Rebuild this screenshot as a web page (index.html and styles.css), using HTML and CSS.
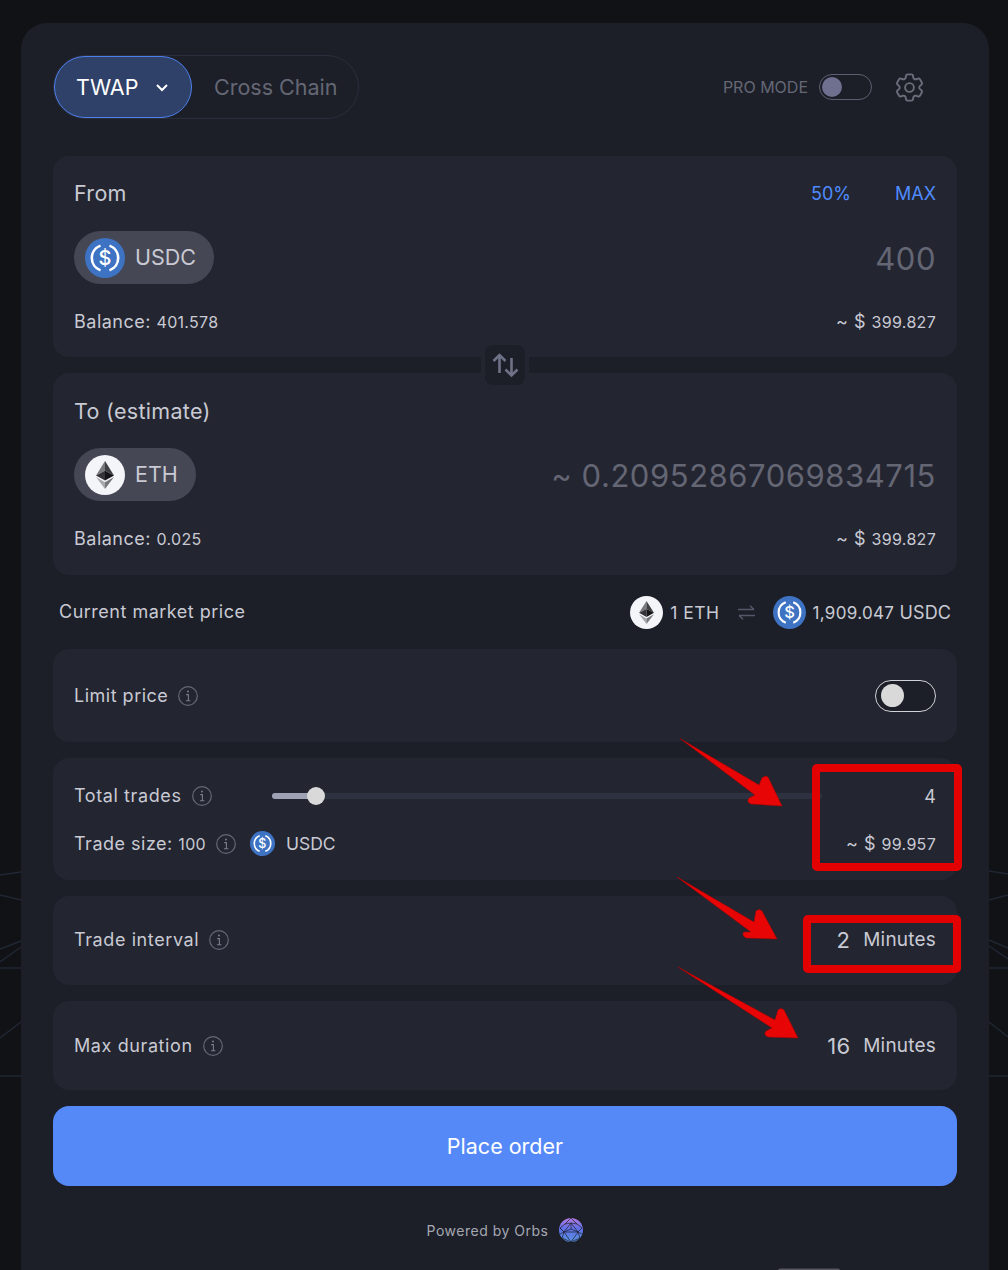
FILE: index.html
```html
<!DOCTYPE html>
<html lang="en">
<head>
  <meta charset="UTF-8">
  <meta name="viewport" content="width=device-width, initial-scale=1.0">
  <title>TWAP</title>
  <link rel="stylesheet" href="styles.css">
</head>
<body>
  <svg class="sprite" width="0" height="0">
    <symbol id="usdc" viewBox="0 0 40 40">
      <circle cx="20" cy="20" r="20" fill="#3e73c4"/>
      <path d="M15.5 7.600a13.200 13.200 0 0 0 0 24.800M24.500 7.600a13.200 13.200 0 0 1 0 24.800" fill="none" stroke="#fff" stroke-width="2.600"/>
    </symbol>
    <symbol id="eth" viewBox="0 0 40 40">
      <circle cx="20" cy="20" r="20" fill="#f3f5f9"/>
      <path d="M20 6 11 20.400 20 15.800z" fill="#7a7a7e"/>
      <path d="M20 6 29 20.400 20 15.800z" fill="#3f3f42"/>
      <path d="M20 15.800 11 20.400 20 25.600z" fill="#343437"/>
      <path d="M20 15.800 29 20.400 20 25.600z" fill="#141416"/>
      <path d="M11 22 20 34V27.300z" fill="#a9a9ac"/>
      <path d="M29 22 20 34V27.300z" fill="#77777b"/>
    </symbol>
    <symbol id="info" viewBox="0 0 20 20">
      <circle cx="10" cy="10" r="9.300" fill="none" stroke="#666876" stroke-width="1.200"/>
      <circle cx="10" cy="5.600" r="1" fill="#7b7d8b"/>
      <path d="M8.200 8.600H10.400V14.600M8 14.800H12.400" fill="none" stroke="#7b7d8b" stroke-width="1.100"/>
    </symbol>
  </svg>

  <svg class="bg-lines" width="1008" height="1270" viewBox="0 0 1008 1270">
    <path d="M0 875 21 872M0 895 21 900M0 949 21 941M0 962 21 947M0 968H21M0 1038 21 1022M0 1076H21"/>
    <path d="M989 871 1008 874M989 900 1008 895M989 940 1008 948M989 946 1008 959M989 968H1008M989 1022 1008 1037M989 1076H1008"/>
  </svg>

  <main class="panel">
    <header class="panel__head">
      <div class="tabs">
        <button class="tab tab--active">TWAP
          <svg width="14" height="9" viewBox="0 0 14 9"><path d="M2 2 7 7 12 2" fill="none" stroke="#fff" stroke-width="2"/></svg>
        </button>
        <button class="tab">Cross Chain</button>
      </div>
      <div class="head__tools">
        <span class="pro-label">PRO MODE</span>
        <span class="toggle toggle--pro"><i></i></span>
        <svg class="gear" width="35" height="35" viewBox="0 0 24 24" fill="none" stroke="#6b6d7b" stroke-width="1.300">
          <path d="M9.594 3.940c.09-.542.56-.94 1.110-.94h2.593c.55 0 1.020.398 1.110.94l.213 1.281c.063.374.313.686.645.87.074.04.147.083.22.127.324.196.72.257 1.075.124l1.217-.456a1.125 1.125 0 011.370.49l1.296 2.247a1.125 1.125 0 01-.26 1.431l-1.003.827c-.293.24-.438.613-.431.992a6.759 6.759 0 010 .255c-.007.378.138.75.43.99l1.005.828c.424.35.534.954.26 1.43l-1.298 2.247a1.125 1.125 0 01-1.369.491l-1.217-.456c-.355-.133-.75-.072-1.076.124a6.57 6.57 0 01-.22.128c-.331.183-.581.495-.644.869l-.213 1.280c-.09.543-.56.941-1.110.941h-2.594c-.55 0-1.020-.398-1.110-.94l-.213-1.281c-.062-.374-.312-.686-.644-.87a6.52 6.52 0 01-.22-.127c-.325-.196-.72-.257-1.076-.124l-1.217.456a1.125 1.125 0 01-1.369-.49l-1.297-2.247a1.125 1.125 0 01.26-1.431l1.004-.827c.292-.24.437-.613.43-.992a6.932 6.932 0 010-.255c.007-.378-.138-.75-.43-.99l-1.004-.828a1.125 1.125 0 01-.26-1.430l1.297-2.247a1.125 1.125 0 011.370-.491l1.216.456c.356.133.751.072 1.076-.124.072-.044.146-.087.22-.128.332-.183.582-.495.644-.869l.214-1.281z"/>
          <circle cx="12" cy="12" r="3"/>
        </svg>
      </div>
    </header>

    <section class="swap">
      <div class="card token">
        <div class="row">
          <span class="label">From</span>
          <span class="shortcuts"><a>50%</a><a>MAX</a></span>
        </div>
        <div class="row row--pick">
          <span class="pill">
            <svg class="pill__icon" viewBox="0 0 40 40"><use href="#usdc" width="40" height="40"/><text x="20" y="27.200" text-anchor="middle" class="usdc-glyph">$</text></svg>
            USDC
          </span>
          <span class="amount">400</span>
        </div>
        <div class="row">
          <span class="label label--value">Balance: <small>401.578</small></span>
          <span class="label label--value">~ $ <small>399.827</small></span>
        </div>
      </div>
      <div class="swap__btn">
        <svg width="28" height="28" viewBox="0 0 28 28" fill="none" stroke="#6f7287" stroke-width="2.600">
          <path d="M8.500 22V4.500M2.500 10 8.500 4 14.500 10"/>
          <path d="M20.500 7V24.500M14.500 18.500 20.500 24.500 26.500 18.500"/>
        </svg>
      </div>
      <div class="card token token--to">
        <div class="row">
          <span class="label">To (estimate)</span>
        </div>
        <div class="row row--pick">
          <span class="pill"><svg class="pill__icon"><use href="#eth"/></svg>ETH</span>
          <span class="amount">~ 0.20952867069834715</span>
        </div>
        <div class="row">
          <span class="label label--value">Balance: <small>0.025</small></span>
          <span class="label label--value">~ $ <small>399.827</small></span>
        </div>
      </div>
    </section>

    <div class="market">
      <span class="label label--market">Current market price</span>
      <div class="market__rate">
        <svg class="market__icon"><use href="#eth"/></svg>
        <span class="market__text market__text--eth">1 ETH</span>
        <svg class="market__swap" width="17" height="15" viewBox="0 0 17 15" fill="none" stroke="#55576a" stroke-width="1.500">
          <path d="M0 4.500H16M12 .8 16 4.500M17 10.500H1M5 14.200 1 10.500"/>
        </svg>
        <svg class="market__icon" viewBox="0 0 40 40"><use href="#usdc" width="40" height="40"/><text x="20" y="27.200" text-anchor="middle" class="usdc-glyph">$</text></svg>
        <span class="market__text"><span class="market__num">1,909.047</span> <span class="market__unit">USDC</span></span>
      </div>
    </div>

    <div class="card option option--limit">
      <span class="label label--info label--value">Limit price <svg class="info"><use href="#info"/></svg></span>
      <span class="toggle toggle--limit"><i></i></span>
    </div>

    <div class="card trades">
      <div class="trades__row">
        <span class="label label--info trades__name">Total trades <svg class="info"><use href="#info"/></svg></span>
        <div class="slider"><div class="slider__fill"></div><i class="slider__thumb"></i></div>
        <span class="trades__value">4</span>
      </div>
      <div class="row">
        <span class="label label--info label--value">
          <span>Trade size: <small>100</small></span>
          <svg class="info"><use href="#info"/></svg>
          <svg class="trades__icon" viewBox="0 0 40 40"><use href="#usdc" width="40" height="40"/><text x="20" y="27.200" text-anchor="middle" class="usdc-glyph">$</text></svg>
          <span class="trades__unit">USDC</span>
        </span>
        <span class="label label--value">~ $ <small>99.957</small></span>
      </div>
    </div>

    <div class="card option option--interval">
      <span class="label label--info">Trade interval <svg class="info"><use href="#info"/></svg></span>
      <span class="duration"><b>2</b>Minutes</span>
    </div>

    <div class="card option">
      <span class="label label--info">Max duration <svg class="info"><use href="#info"/></svg></span>
      <span class="duration"><b>16</b>Minutes</span>
    </div>

    <button class="submit">Place order</button>

    <footer class="powered">
      Powered by Orbs
      <svg width="24" height="24" viewBox="0 0 24 24">
        <defs>
          <linearGradient id="orb" x1="0" y1="0" x2="0" y2="1">
            <stop offset="0" stop-color="#b57be0"/>
            <stop offset=".45" stop-color="#5f6fe8"/>
            <stop offset="1" stop-color="#5a93e0"/>
          </linearGradient>
        </defs>
        <circle cx="12" cy="12" r="12" fill="url(#orb)"/>
        <path d="M12 0 6 6 12 5 18 6zM6 6 1 10 5 14 12 5M18 6 23 10 19 14 12 5M5 14H19L12 24zM5 14 1 10M5 14 3 20 12 24 21 20 19 14M12 5 12 11M5 14 12 11 19 14M1 16 5 14M23 16 19 14" fill="none" stroke="#1c1f28" stroke-width=".7"/>
      </svg>
    </footer>
  </main>

  <svg class="marks" width="1008" height="1270" viewBox="0 0 1008 1270">
    <rect class="marks__sliver" x="778" y="1268.500" width="62" height="4" rx="2"/>
    <path class="marks__arrow" d="M680 738.500 759 785 762 778Q765 775 768 777L782 806 751 804Q746 802 749 798L755 795z"/>
    <path class="marks__arrow" d="M677 877 754 922 756 911Q759 908 762 911L777 939 746 938Q741 935 744 932L751 932z"/>
    <path class="marks__arrow" d="M678 967 775 1020 778 1010Q781 1007 784 1010L798 1038 768 1037Q763 1035 766 1031L772 1028z"/>
    <rect class="marks__box" x="816" y="768" width="142" height="99" rx="1"/>
    <rect class="marks__box" x="807" y="919" width="150" height="50" rx="1"/>
  </svg>
</body>
</html>
```

FILE: styles.css
```css
* {
  margin: 0;
  padding: 0;
  box-sizing: border-box;
}

html,
body {
  height: 1270px;
  overflow: hidden;
}

body {
  position: relative;
  background: #111216;
  font-family: Inter, "Noto Sans", sans-serif;
  color: #c9cad3;
}

button {
  border: none;
  font: inherit;
}

small {
  font-size: 16px;
  letter-spacing: 0.3px;
}

.sprite {
  position: absolute;
}

.usdc-glyph {
  font-family: Inter, sans-serif;
  font-size: 20px;
  font-weight: 500;
  fill: #fff;
}

.bg-lines {
  position: absolute;
  top: 0;
  left: 0;
}

.bg-lines path {
  fill: none;
  stroke: #1f2733;
  stroke-width: 1.5;
}

.marks {
  position: absolute;
  top: 0;
  left: 0;
  pointer-events: none;
}

.marks__sliver {
  fill: #55565f;
}

.marks__arrow {
  fill: #e80505;
  stroke: #b30000;
  stroke-width: 0.5;
}

.marks__box {
  fill: none;
  stroke: #e30000;
  stroke-width: 8;
}

.panel {
  position: relative;
  margin: 23px 19px 0 21px;
  padding: 32px;
  min-height: 1300px;
  background: #1c1f28;
  border-radius: 26px;
}

.panel__head {
  display: flex;
  align-items: center;
  justify-content: space-between;
  margin-bottom: 37px;
  height: 64px;
}

.tabs {
  display: flex;
  align-items: center;
  height: 64px;
  width: 306px;
  border: 1px solid #2a2e3d;
  border-radius: 32px;
}

.tab {
  background: none;
  color: #656775;
  font-size: 21.5px;
  padding-left: 22px;
}

.tab--active {
  display: flex;
  align-items: center;
  justify-content: space-between;
  width: 138px;
  height: 62px;
  padding: 0 22px 0 21px;
  background: #304169;
  border: 1px solid #4c80ec;
  border-radius: 31px;
  color: #fff;
}

.head__tools {
  display: flex;
  align-items: center;
  margin-right: 30px;
}

.pro-label {
  margin-right: 11px;
  font-size: 16px;
  color: #656775;
}

.gear {
  margin-left: 20px;
}

.toggle {
  display: flex;
  align-items: center;
  border: 1px solid #5c5f70;
  border-radius: 20px;
}

.toggle i {
  display: block;
  border-radius: 50%;
}

.toggle--pro {
  width: 53px;
  height: 26px;
  padding-left: 2px;
}

.toggle--pro i {
  width: 20px;
  height: 20px;
  background: #6f7090;
}

.toggle--limit {
  width: 61px;
  height: 32px;
  padding-left: 5px;
  background: #1c1f28;
  border-color: #d0d1d6;
}

.toggle--limit i {
  width: 23px;
  height: 23px;
  background: #d9d9d9;
}

.swap {
  position: relative;
  display: flex;
  flex-direction: column;
  gap: 16px;
}

.swap__btn {
  position: absolute;
  top: 185px;
  left: 428px;
  display: flex;
  align-items: center;
  justify-content: center;
  width: 48px;
  height: 48px;
  background: #1c1f28;
  border: 4px solid #232531;
  border-radius: 12px;
}

.card {
  background: #232531;
  border-radius: 16px;
}

.token {
  display: flex;
  flex-direction: column;
  gap: 26px;
  height: 201px;
  padding: 25px 21px 0;
}

.token--to {
  gap: 25.5px;
  height: 202px;
  padding-top: 25.5px;
}

.row {
  display: flex;
  align-items: center;
  justify-content: space-between;
}

.token .row {
  height: 24px;
}

.token .row--pick {
  height: 53px;
}

.label {
  font-size: 18px;
  line-height: 24px;
  letter-spacing: 0.6px;
  color: #c9cad3;
  white-space: nowrap;
}

.label--market,
.label--value {
  letter-spacing: 0.5px;
}

.token .row:first-child .label {
  font-size: 21.5px;
  letter-spacing: 0.3px;
}

.label--info {
  display: flex;
  align-items: center;
  gap: 10px;
}

.shortcuts {
  display: flex;
  gap: 44px;
  padding-top: 2px;
  font-size: 18px;
  line-height: 24px;
  color: #4f8bff;
}

.pill {
  display: flex;
  align-items: center;
  gap: 10px;
  height: 53px;
  padding: 0 18px 2px 11px;
  background: #454754;
  border-radius: 27px;
  font-size: 21.5px;
}

.pill__icon {
  width: 40px;
  height: 40px;
  margin-top: 2px;
}

.amount {
  padding-top: 2px;
  font-size: 31px;
  letter-spacing: 0.55px;
  color: #646674;
}

.market {
  display: flex;
  align-items: center;
  justify-content: space-between;
  height: 74px;
  padding: 0 6px;
}

.market__rate {
  display: flex;
  align-items: center;
}

.market__icon {
  width: 33px;
  height: 33px;
}

.market__text {
  margin-left: 7px;
  font-size: 18px;
  letter-spacing: 0.3px;
}

.market__text--eth {
  font-size: 17.5px;
  letter-spacing: 0.5px;
}

.market__num {
  font-size: 17px;
}

.market__unit {
  letter-spacing: 0.1px;
}

.market__swap {
  margin: 0 18px;
}

.info {
  width: 20px;
  height: 20px;
}

.option {
  display: flex;
  align-items: center;
  justify-content: space-between;
  height: 89px;
  margin-bottom: 16px;
  padding: 0 21px;
}

.option--limit {
  height: 93px;
}

.option--interval {
  padding-bottom: 2px;
}

.trades {
  display: flex;
  flex-direction: column;
  gap: 23px;
  height: 122px;
  margin-bottom: 16px;
  padding: 26px 21px 0;
}

.trades__row {
  display: flex;
  align-items: center;
}

.trades__name {
  width: 198px;
  flex: none;
}

.slider {
  position: relative;
  flex: 1;
  height: 6px;
  background: #2e3140;
  border-radius: 3px;
}

.slider__fill {
  width: 44px;
  height: 100%;
  background: #9fa2b4;
  border-radius: 3px;
}

.slider__thumb {
  position: absolute;
  top: -6px;
  left: 35px;
  width: 18px;
  height: 18px;
  background: #d9d9d9;
  border-radius: 50%;
}

.trades__value {
  width: 114px;
  flex: none;
  text-align: right;
  font-size: 18px;
}

.trades__icon {
  width: 25px;
  height: 25px;
  margin-left: 4px;
}

.trades__unit {
  margin-left: 1px;
  font-size: 17.5px;
  letter-spacing: 0;
}

.duration {
  display: flex;
  align-items: center;
  gap: 13px;
  font-size: 19px;
  letter-spacing: 0.2px;
}

.duration b {
  font-size: 22px;
  font-weight: 400;
}

.submit {
  display: block;
  width: 100%;
  height: 80px;
  background: #5589f7;
  border-radius: 16px;
  color: #fff;
  font-size: 21.5px;
}

.powered {
  display: flex;
  align-items: center;
  justify-content: center;
  gap: 11px;
  margin-top: 32px;
  height: 24px;
  font-size: 14px;
  letter-spacing: 0.5px;
  color: #a5a7b2;
}
```
